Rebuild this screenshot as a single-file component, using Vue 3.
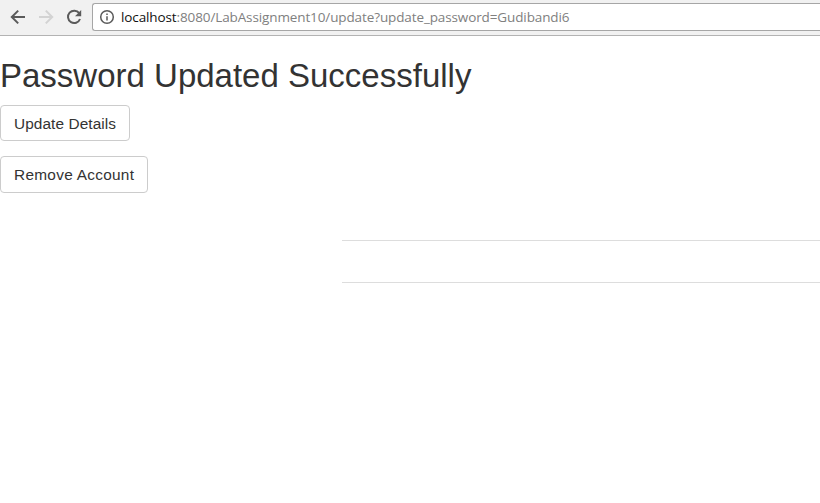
<script setup>
const actions = ['Update Details', 'Remove Account']
</script>

<template>
  <div class="window">
    <header class="toolbar">
      <svg class="nav" viewBox="0 0 18 18"><path d="M16 9H3M9.2 2.6 2.8 9l6.4 6.4" /></svg>
      <svg class="nav off" viewBox="0 0 18 18"><path d="M2 9h13M8.8 2.6 15.2 9l-6.4 6.4" /></svg>
      <svg class="nav" viewBox="0 0 18 18">
        <path d="M14.2 5.2A6.2 6.2 0 1 0 15 11" />
        <path class="solid" d="M16.2 2v6.2H10z" />
      </svg>
      <div class="address">
        <svg class="info" viewBox="0 0 16 16">
          <circle cx="8" cy="8" r="6.3" />
          <path d="M8 7.2v4.2M8 4.4v1.7" />
        </svg>
        <span class="url"><span class="host">localhost</span>:8080/LabAssignment10/update?update_password=Gudibandi6</span>
      </div>
    </header>
    <main>
      <h2>Password Updated Successfully</h2>
      <div class="actions">
        <button v-for="a in actions" :key="a" type="button">{{ a }}</button>
      </div>
      <div class="panel"></div>
    </main>
  </div>
</template>

<style>
body { background: #fff; }
</style>

<style scoped>
.window {
  height: 503px;
  overflow: hidden;
  font-family: "Liberation Sans", Arial, sans-serif;
  color: #333;
}
.toolbar {
  box-sizing: border-box;
  height: 36px;
  padding: 3px 0 4px 9px;
  display: flex;
  align-items: center;
  background: #f1f1f1;
  border-bottom: 1px solid #b3b3b3;
}
.nav {
  width: 18px;
  height: 18px;
  margin-right: 10px;
  flex: none;
  fill: none;
  stroke: #5a5a5a;
  stroke-width: 2;
}
.nav.off { stroke: #d3d3d3; }
.solid { fill: #5a5a5a; stroke: none; }
.address {
  box-sizing: border-box;
  flex: 1;
  height: 28px;
  margin-left: -1px;
  padding-left: 6px;
  display: flex;
  align-items: center;
  gap: 6px;
  background: #fff;
  border: 1px solid #a6a6a6;
  border-right: 0;
  border-radius: 3px 0 0 3px;
}
.info {
  width: 16px;
  height: 16px;
  flex: none;
  fill: none;
  stroke: #5a5a5a;
  stroke-width: 1.5;
}
.url {
  font: 13.5px/20px "Open Sans", "Noto Sans", sans-serif;
  letter-spacing: -0.115px;
  color: #808080;
  white-space: nowrap;
}
.host { color: #111; }
h2 {
  margin: 22px 0 11px;
  font-size: 33px;
  line-height: 36px;
  font-weight: 400;
  white-space: nowrap;
}
.actions {
  display: flex;
  flex-direction: column;
  align-items: flex-start;
  gap: 15px;
}
button {
  box-sizing: border-box;
  height: 36px;
  padding: 1px 13px 0;
  font: 15.4px/22px "Liberation Sans", Arial, sans-serif;
  letter-spacing: 0.08px;
  color: #333;
  background: #fff;
  border: 1px solid #ccc;
  border-radius: 4px;
}
button:last-child {
  height: 37px;
  padding-top: 0;
  letter-spacing: 0.28px;
}
.panel {
  box-sizing: border-box;
  height: 43px;
  margin: 47px 0 0 342px;
  border-top: 1px solid #ddd;
  border-bottom: 1px solid #ddd;
}
</style>
